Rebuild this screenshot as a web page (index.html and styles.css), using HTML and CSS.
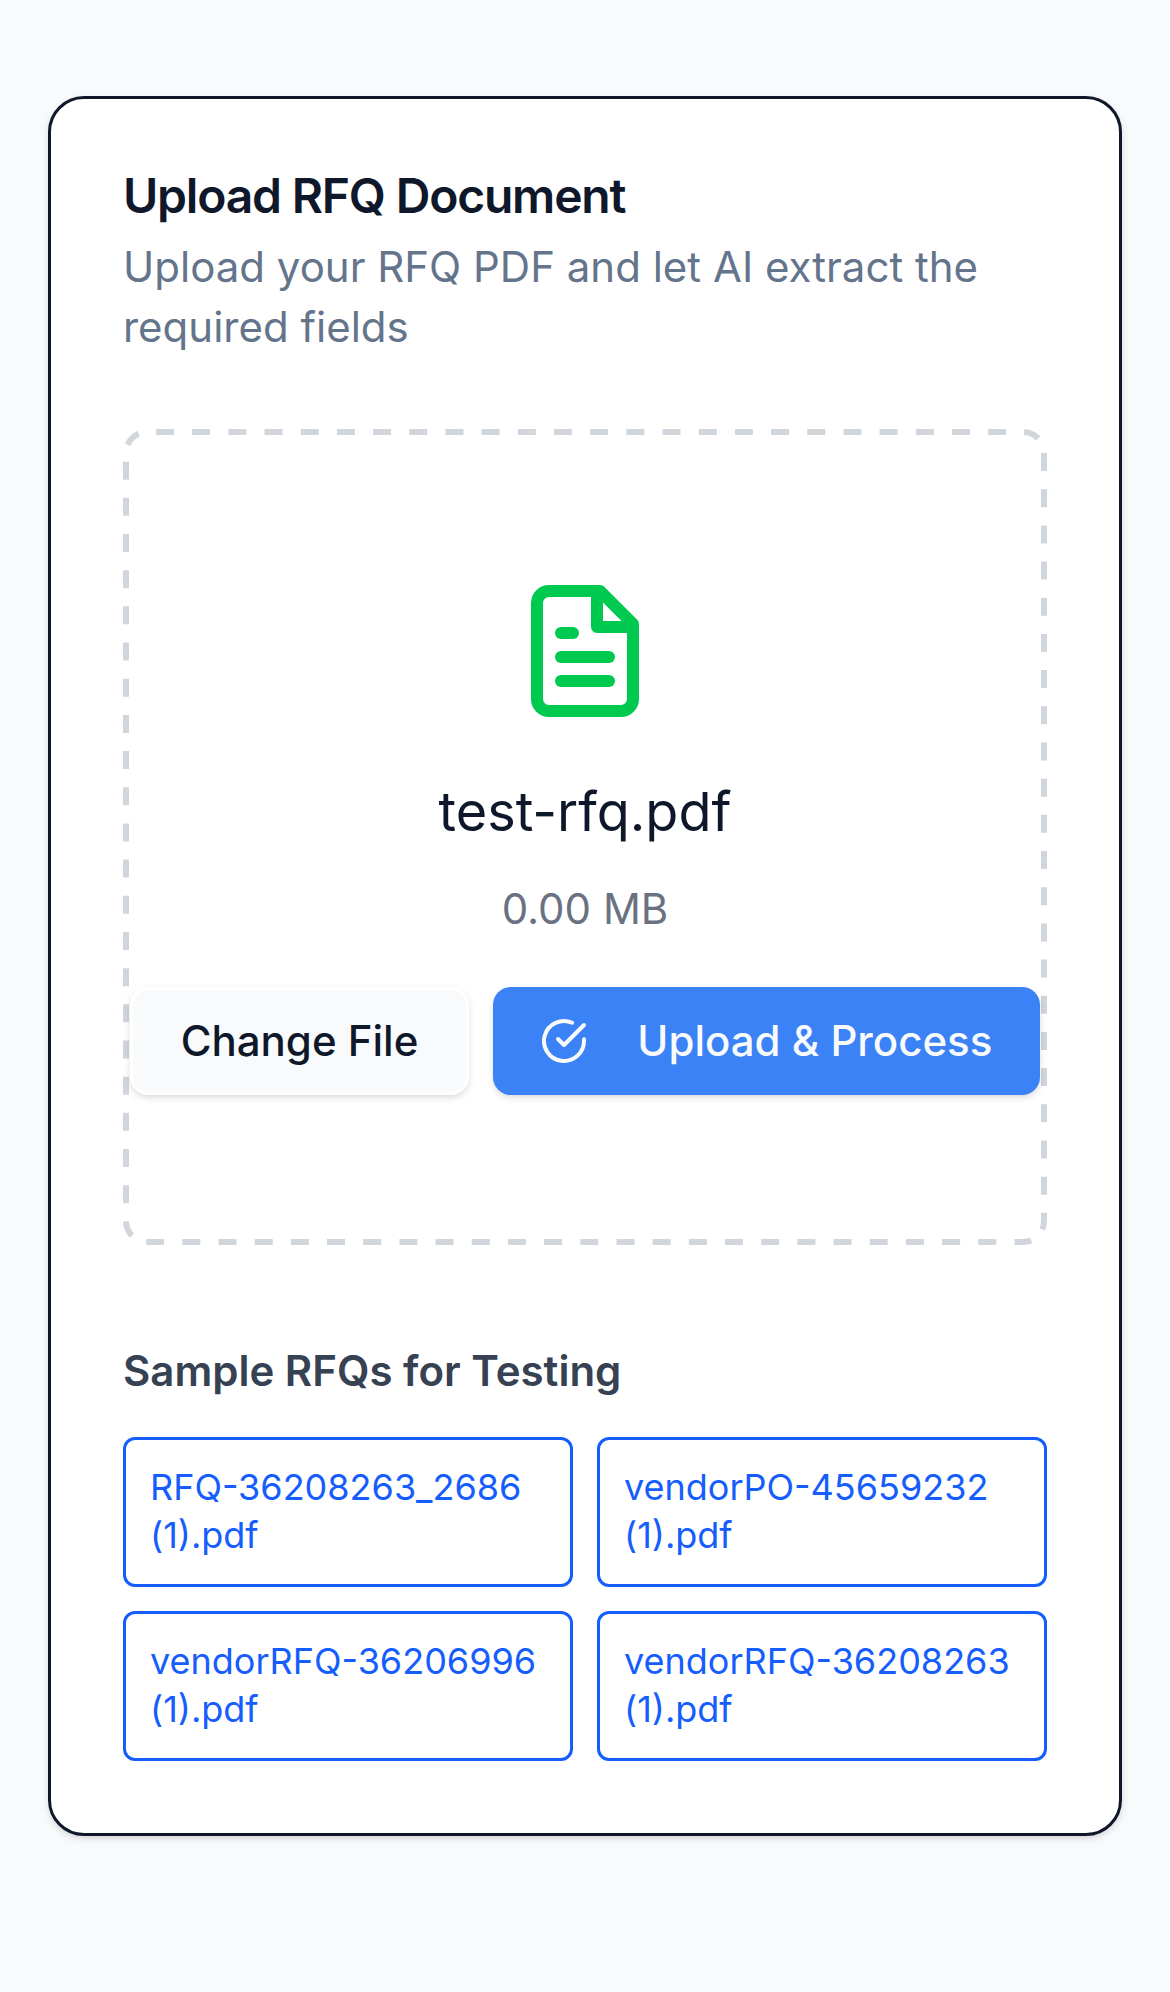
FILE: index.html
```html
<!DOCTYPE html>
<html lang="en">
<head>
<meta charset="utf-8">
<title>Upload RFQ Document</title>
<link rel="stylesheet" href="styles.css">
</head>
<body>
<main class="page">
  <section class="card">
    <header class="card-header">
      <h1 class="title">Upload RFQ Document</h1>
      <p class="description">Upload your RFQ PDF and let AI extract the required fields</p>
    </header>
    <div class="dropzone">
      <svg class="dropzone-outline" viewBox="0 0 924 816" fill="none" aria-hidden="true"><rect width="924" height="816" rx="24" stroke="currentColor" stroke-width="12" stroke-dasharray="18 18.18" stroke-dashoffset="-9"/></svg>
      <svg class="file-icon" viewBox="0 0 24 24" fill="none" stroke="currentColor" stroke-width="2" stroke-linecap="round" stroke-linejoin="round"><path d="M14.5 2H6a2 2 0 0 0-2 2v16a2 2 0 0 0 2 2h12a2 2 0 0 0 2-2V7.5L14.5 2z"/><polyline points="14 2 14 8 20 8"/><path d="M10 9H8"/><path d="M16 13H8"/><path d="M16 17H8"/></svg>
      <p class="file-name">test-rfq.pdf</p>
      <p class="file-size">0.00 MB</p>
      <div class="actions">
        <button class="button button-outline">Change File</button>
        <button class="button button-primary"><svg class="check-icon" viewBox="0 0 24 24" fill="none" stroke="currentColor" stroke-width="2" stroke-linecap="round" stroke-linejoin="round"><path d="M22 11.08V12a10 10 0 1 1-5.93-9.14"/><path d="m9 11 3 3L22 4"/></svg>Upload &amp; Process</button>
      </div>
    </div>
    <h2 class="samples-title">Sample RFQs for Testing</h2>
    <div class="samples">
      <a class="sample">RFQ-36208263_2686 (1).pdf</a>
      <a class="sample">vendorPO-45659232 (1).pdf</a>
      <a class="sample">vendorRFQ-36206996 (1).pdf</a>
      <a class="sample">vendorRFQ-36208263 (1).pdf</a>
    </div>
  </section>
</main>
</body>
</html>
```
FILE: styles.css
```css
* { box-sizing: border-box; margin: 0; }
body { background: #f9fafc; color: #0f172a; font-family: Inter, "Liberation Sans", sans-serif; }
.page { padding: 96px 48px; min-height: 1992px; }
.card { background: #fff; border: 3px solid #0f172a; border-radius: 36px; padding: 72px; height: 1740px; box-shadow: 0 3px 9px rgba(0,0,0,.1), 0 3px 6px -3px rgba(0,0,0,.1); }
.title { padding-top: 1px; font-size: 48px; line-height: 48px; font-weight: 600; letter-spacing: -1.2px; }
.description { margin-top: 17px; font-size: 42px; line-height: 60px; color: #64748b; }
.dropzone { position: relative; margin-top: 72px; height: 816px; border-radius: 24px; display: flex; flex-direction: column; align-items: center; padding-top: 150px; }
.dropzone-outline { position: absolute; inset: 0; width: 100%; height: 100%; border-radius: 24px; overflow: hidden; color: #d1d5dc; }
.file-icon { width: 144px; height: 144px; color: #00c950; flex: none; }
.file-name { margin-top: 47px; font-size: 54px; line-height: 84px; }
.file-size { margin-top: 25px; font-size: 42px; line-height: 60px; color: #6a7282; }
.actions { position: relative; margin-top: 48px; display: flex; gap: 24px; }
.button { flex: none; display: flex; align-items: center; height: 108px; border: 0; border-radius: 18px; font: 500 42px/60px Inter, "Liberation Sans", sans-serif; padding: 0 48px; white-space: nowrap; box-shadow: 0 3px 9px rgba(0,0,0,.1), 0 3px 6px -3px rgba(0,0,0,.1); }
.button-outline { background: #f9fafc; color: #0f172a; border: 3px solid #fff; }
.button-primary { background: #3b82f6; color: #f8fafc; }
.check-icon { width: 48px; height: 48px; margin: 0 49px 0 -1px; }
.samples-title { margin-top: 96px; font-size: 42px; line-height: 60px; font-weight: 600; color: #364153; }
.samples { margin-top: 36px; display: grid; grid-template-columns: 1fr 1fr; gap: 24px; }
.sample { border: 3px solid #155dfc; border-radius: 12px; color: #155dfc; font-size: 36px; line-height: 48px; padding: 23px 24px 25px; }
```
